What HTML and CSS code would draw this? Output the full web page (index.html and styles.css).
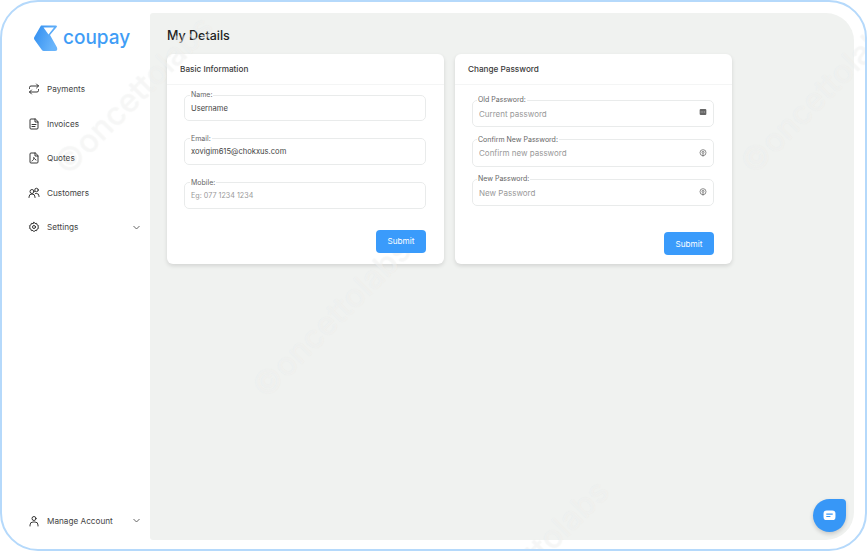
FILE: index.html
```html
<!DOCTYPE html>
<html lang="en">
<head>
<meta charset="utf-8">
<title>My Details</title>
<link rel="stylesheet" href="styles.css">
</head>
<body>
<div class="frame">
  <aside class="sidebar">
    <div class="brand">
      <svg class="brand-mark" width="25" height="28" viewBox="0 0 25 28">
        <defs><linearGradient id="lg" x1="0" y1="0" x2="1" y2="0.4"><stop offset="0" stop-color="#2f8df0"/><stop offset="1" stop-color="#6ab5fb"/></linearGradient></defs>
        <path d="M8 1.5 L23 1.5 Q24.5 1.5 23.8 3 L17 11 L24 23.5 Q25 27 22 27 L11 27 Q9.5 27 8.5 25.5 L1.3 15.5 Q0.5 14 1.5 12.8 Z" fill="url(#lg)"/>
        <path d="M10.5 3.5 L21 3.5 L15.5 10.5 Z" fill="#fff"/>
      </svg>
      <span class="brand-name">coupay</span>
    </div>
    <nav class="nav">
      <a class="nav-item"><svg class="ico" viewBox="0 0 24 24"><path d="M17 2l4 4-4 4M3 11V9a3 3 0 0 1 3-3h15M7 22l-4-4 4-4M21 13v2a3 3 0 0 1-3 3H3"/></svg><span>Payments</span></a>
      <a class="nav-item"><svg class="ico" viewBox="0 0 24 24"><path d="M14 2H6a2 2 0 0 0-2 2v16a2 2 0 0 0 2 2h12a2 2 0 0 0 2-2V8zM14 2v6h6M8 13h8M8 17h6"/></svg><span>Invoices</span></a>
      <a class="nav-item"><svg class="ico" viewBox="0 0 24 24"><path d="M14 2H6a2 2 0 0 0-2 2v16a2 2 0 0 0 2 2h12a2 2 0 0 0 2-2V8zM14 2v6h6M8 18c2-1 5-5 4-7-1-1-1.500 2 4 5"/></svg><span>Quotes</span></a>
      <a class="nav-item"><svg class="ico" viewBox="0 0 24 24"><path d="M2 21v-1a6 6 0 0 1 12 0v1M15 13h2a5 5 0 0 1 5 5v1"/><circle cx="8" cy="9" r="4"/><circle cx="17" cy="6" r="3.500"/></svg><span>Customers</span></a>
      <a class="nav-item"><svg class="ico" viewBox="0 0 24 24"><circle cx="12" cy="12" r="3"/><path d="M12 2.500l2 2.700 3.300-.5.800 3.200 3 1.500-1.200 2.600 1.200 2.600-3 1.500-.8 3.200-3.300-.5-2 2.700-2-2.700-3.300.5-.8-3.200-3-1.500 1.200-2.600-1.200-2.600 3-1.500.8-3.200 3.300.5z"/></svg><span class="grow">Settings</span><svg class="chev" viewBox="0 0 12 12"><path d="M2 4l4 4 4-4"/></svg></a>
    </nav>
    <a class="nav-item account"><svg class="ico" viewBox="0 0 24 24"><circle cx="12" cy="7" r="4"/><path d="M4 22v-2a6 6 0 0 1 6-6h4a6 6 0 0 1 6 6v2"/></svg><span class="grow">Manage Account</span><svg class="chev" viewBox="0 0 12 12"><path d="M2 4l4 4 4-4"/></svg></a>
  </aside>
  <main class="main">
    <h1 class="title">My Details</h1>
    <div class="cards">
      <section class="card">
        <h2 class="card-head">Basic Information</h2>
        <form class="card-body basic">
          <fieldset class="field"><legend>Name:</legend><input class="filled" value="Username"></fieldset>
          <fieldset class="field"><legend>Email:</legend><input class="filled" value="xovigim615@chokxus.com"></fieldset>
          <fieldset class="field"><legend>Mobile:</legend><input class="small" placeholder="Eg: 077 1234 1234"></fieldset>
          <button class="submit" type="button">Submit</button>
        </form>
      </section>
      <section class="card">
        <h2 class="card-head">Change Password</h2>
        <form class="card-body password">
          <fieldset class="field"><legend>Old Password:</legend><input placeholder="Current password"><svg class="trail trail-key" viewBox="0 0 12 12"><rect x="1" y="1.500" width="10" height="9" rx="1.500" fill="#666" stroke="none"/><path d="M2.500 6h7" stroke="#ddd" stroke-width="1" stroke-dasharray="1.500 1"/></svg></fieldset>
          <fieldset class="field"><legend>Confirm New Password:</legend><input placeholder="Confirm new password"><svg class="trail" viewBox="0 0 12 12"><circle cx="6" cy="5.500" r="4.500"/><circle cx="6" cy="5" r="1.500"/><path d="M6 6.500v5"/></svg></fieldset>
          <fieldset class="field"><legend>New Password:</legend><input placeholder="New Password"><svg class="trail" viewBox="0 0 12 12"><circle cx="6" cy="5.500" r="4.500"/><circle cx="6" cy="5" r="1.500"/><path d="M6 6.500v5"/></svg></fieldset>
          <button class="submit" type="button">Submit</button>
        </form>
      </section>
    </div>
    <button class="chat" type="button" aria-label="Chat"><svg viewBox="0 0 14 12" width="13" height="11"><rect x="0.500" y="0.500" width="13" height="10.500" rx="3.500" fill="#fff"/><path d="M3.500 4.500h7M3.500 7h4.500" stroke="#3797f7" stroke-width="1.100"/></svg></button>
  </main>
  <span class="mark mark-a">©oncettolabs</span>
  <span class="mark mark-b">©oncettolabs</span>
  <span class="mark mark-c">©oncettolabs</span>
  <span class="mark mark-d">©oncettolabs</span>
</div>
</body>
</html>
```
FILE: styles.css
```css
* { box-sizing: border-box; }
html, body { margin: 0; padding: 0; }
body { width: 867px; height: 551px; background: #fff; font-family: Inter, "Liberation Sans", sans-serif; color: #333; overflow: hidden; }
.frame { position: relative; display: flex; width: 867px; height: 551px; border: 2px solid #b5d9fb; border-radius: 38px; background: #fff; padding: 11px 11px 9px 0; overflow: hidden; }
.sidebar { width: 148px; flex: none; display: flex; flex-direction: column; padding-bottom: 12px; }
.brand { display: flex; align-items: center; gap: 5px; margin: 11px 0 0 31px; height: 28px; }
.brand-mark { flex: none; }
.brand-name { font-size: 19px; font-weight: 500; color: #3f9df6; line-height: 28px; }
.nav { display: flex; flex-direction: column; gap: 20px; margin-top: 30px; flex: 1; }
.nav-item { position: relative; z-index: 1; display: flex; align-items: center; height: 14.500px; padding: 0 9px 0 26px; font-size: 8.200px; color: #444; }
.ico { width: 12px; height: 12px; fill: none; stroke: #222; stroke-width: 1.800; stroke-linecap: round; stroke-linejoin: round; margin-right: 7px; flex: none; }
.grow { flex: 1; }
.chev { width: 9px; height: 9px; fill: none; stroke: #555; stroke-width: 1.200; flex: none; }
.main { position: relative; flex: 1; background: #f0f2f0; border-radius: 3px 28px 28px 3px; padding: 13px 17px; overflow: hidden; }
.title { margin: 0 0 8px; font-size: 12.500px; line-height: 20px; font-weight: 500; color: #222; }
.cards { display: flex; gap: 11px; align-items: flex-start; }
.card { width: 277px; height: 210px; background: #fff; border-radius: 6px; box-shadow: 0 2px 4px rgba(0,0,0,.12); }
.card-head { margin: 0; height: 31px; padding: 0 13px; font-size: 8.200px; line-height: 30px; font-weight: 500; color: #3a3a3a; border-bottom: 1px solid #f4f5f5; }
.card-body { display: flex; flex-direction: column; padding: 0 18px 0 17px; }
.basic { padding-top: 6px; gap: 13.800px; }
.password { padding-top: 11px; gap: 8.500px; }
.field { display: flex; align-items: flex-start; margin: 0; padding: 0 6px; height: 30px; border: 1px solid #e9ebeb; border-radius: 5px; }
.password .field { height: 31px; }
.field legend { padding: 0 1px; margin-left: -1px; font-size: 7px; line-height: 8px; color: #666; }
.password .field legend { margin-left: -2px; }
.field input { flex: 1; min-width: 0; border: 0; outline: 0; background: none; padding: 0; margin-top: 4.500px; font: 7.600px Inter, "Liberation Sans", sans-serif; color: #444; }
.field input.small { font-size: 7.200px; }
.password .field input { margin-top: 4.500px; font-size: 8px; }
.field input::placeholder { color: #999; opacity: 1; }
.trail { width: 8px; height: 8px; fill: none; stroke: #666; stroke-width: 1.100; flex: none; margin-top: 5px; }
.trail-key { margin-top: 4px; }
.submit { position: relative; z-index: 1; align-self: flex-end; width: 50px; height: 23px; margin-top: 7.500px; background: #3a9bfb; border: 0; border-radius: 4px; color: #fff; font: 400 8.200px Inter, "Liberation Sans", sans-serif; }
.password .submit { margin-top: 17.500px; }
.mark { position: absolute; width: 218px; font-size: 32px; line-height: 38px; font-weight: 500; color: rgba(255,255,255,.4); text-shadow: 0 0 1px rgba(190,195,190,.22); transform: rotate(-45deg); white-space: nowrap; pointer-events: none; }
.mark-a { left: 26px; top: 71px; }
.mark-b { left: 224px; top: 294px; }
.mark-c { left: 712px; top: 70px; }
.mark-d { left: 422px; top: 535px; }
.chat { position: absolute; right: 8px; bottom: 8px; width: 33px; height: 33px; padding: 0; display: flex; align-items: center; justify-content: center; border: 0; border-radius: 50% 4px 50% 50%; background: #3797f7; box-shadow: 0 2px 4px rgba(0,0,0,.18); }
```
